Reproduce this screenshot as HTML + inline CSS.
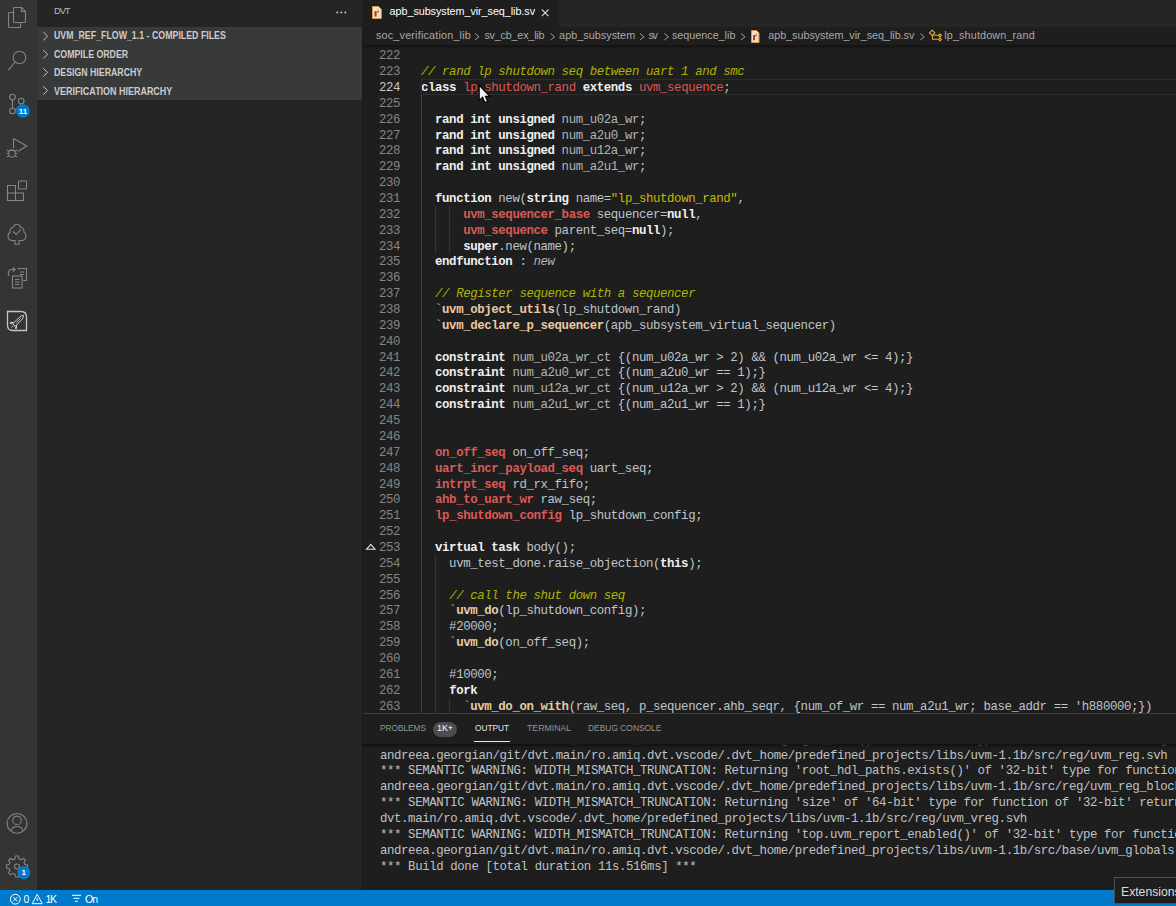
<!DOCTYPE html>
<html><head><meta charset="utf-8">
<style>
*{margin:0;padding:0;box-sizing:border-box}
html,body{width:1176px;height:906px;overflow:hidden;background:#1e1e1e}
body{position:relative;font-family:"Liberation Sans",sans-serif}
.abs{position:absolute}
svg{position:absolute;overflow:visible}
#act{left:0;top:0;width:37px;height:890px;background:#323534}
#side{left:37px;top:0;width:325px;height:890px;background:#252526}
#sechdr{left:37px;top:27px;width:325px;height:72.5px;background:#383a39}
.sh{position:absolute;left:17px;height:18px;font-size:10px;font-weight:bold;color:#cccccc;line-height:18px;white-space:nowrap}
#tabs{left:362px;top:0;width:814px;height:27px;background:#252526}
#tab{left:362px;top:0;width:197px;height:27px;background:#1e1e1e}
#bc{left:362px;top:27px;width:814px;height:18px;background:#1e1e1e}
.bt{position:absolute;top:-0.8px;font-size:10.8px;color:#a9a9a9;line-height:18px;white-space:nowrap}
#editor{left:362px;top:45px;width:814px;height:668px;background:#1e1e1e;overflow:hidden}
#shadow{left:362px;top:45px;width:814px;height:5px;background:linear-gradient(#121212,rgba(30,30,30,0))}
#code{position:absolute;left:59px;top:4.3px;font-family:"Liberation Mono",monospace;font-size:12.4px;letter-spacing:-0.406px;line-height:15.866px;white-space:pre;color:#c8c8c8}
#nums{position:absolute;left:0;top:4.3px;width:38px;text-align:right;font-family:"Liberation Mono",monospace;font-size:12.4px;letter-spacing:-0.406px;line-height:15.866px;color:#858585}
#nums .act{color:#c6c6c6}
.l{height:15.866px}
.k{color:#f0f0f0;font-weight:bold}
.t{color:#d95a55}
.tb{color:#d95a55;font-weight:bold}
.c{color:#adb400;font-style:italic}
.s{color:#c9b800}
.m{color:#e9c9a0;font-weight:bold}
.n{color:#bec5cb}
.d{color:#b4b4b4}
.i{color:#b4b4b4;font-style:italic}
#panel{left:362px;top:713px;width:814px;height:177px;background:#1e1e1e;border-top:1px solid #3e3e3e}
.pt{position:absolute;top:0;font-size:8.9px;color:#969696;white-space:nowrap;line-height:28px}
#outtext{position:absolute;left:18px;top:-10.866px;font-family:"Liberation Mono",monospace;font-size:12.4px;letter-spacing:-0.406px;line-height:15.866px;white-space:pre;color:#bec2c6}
#status{left:0;top:890px;width:1176px;height:16px;background:#007acc}
.st{position:absolute;top:0.5px;font-size:10.5px;color:#ffffff;line-height:16px;white-space:nowrap}
.ai{stroke:#858585;fill:none;stroke-width:1.1}
</style></head><body>
<div class="abs" id="act">
  <!-- explorer -->
  <svg width="37" height="40" style="left:0;top:0">
    <path class="ai" d="M13.5 8.5 Q13.5 7.5 14.5 7.5 H21.5 L25.5 11.5 V21.5 Q25.5 22.5 24.5 22.5 H14.5 Q13.5 22.5 13.5 21.5 Z" />
    <path class="ai" d="M21.5 7.5 V11.5 H25.5" />
    <path class="ai" d="M13.5 12.5 H9.5 Q8.5 12.5 8.5 13.5 V26.5 Q8.5 27.5 9.5 27.5 H19.5 Q20.5 27.5 20.5 26.5 V22.5" />
  </svg>
  <!-- search -->
  <svg width="37" height="40" style="left:0;top:40px">
    <circle class="ai" cx="19.5" cy="17.5" r="6.3" />
    <path class="ai" d="M15 22 L8.3 30.3" />
  </svg>
  <!-- scm -->
  <svg width="37" height="40" style="left:0;top:80px">
    <circle class="ai" cx="12.5" cy="17" r="2.8" />
    <circle class="ai" cx="21.2" cy="21" r="2.8" />
    <circle class="ai" cx="12.5" cy="31" r="2.8" />
    <path class="ai" d="M12.5 19.8 V28.2 M21.2 23.8 Q21 27 15.2 29.5" />
    <circle cx="23" cy="31" r="6.8" fill="#007acc" />
    <text x="23" y="34" font-size="8" font-weight="bold" fill="#fff" text-anchor="middle" font-family="Liberation Sans">11</text>
  </svg>
  <!-- debug -->
  <svg width="37" height="40" style="left:0;top:125px">
    <path class="ai" d="M13.5 13.5 V23 M13.5 13.5 L26.8 21 L18 26.3" />
    <ellipse class="ai" cx="12" cy="28.5" rx="3.3" ry="3.8" />
    <path class="ai" d="M7 25 L9 26.5 M17 25 L15 26.5 M6.5 28.5 H8.7 M17.5 28.5 H15.3 M7 32 L9 30.8 M17 32 L15 30.8 M9 25.5 H15" />
  </svg>
  <!-- extensions -->
  <svg width="37" height="40" style="left:0;top:170px">
    <path class="ai" d="M7.5 15.5 H15.5 V30.5 H7.5 Z M7.5 23 H23.5 V30.5 H15.5" />
    <rect class="ai" x="18.5" y="11" width="8" height="8" rx="0.5" />
  </svg>
  <!-- testing -->
  <svg width="37" height="40" style="left:0;top:215px">
    <path class="ai" d="M15 25.5 H12.5 Q8 25.5 8 21 Q8 18.5 10 17.2 Q9.8 12.8 13.5 12 Q14.5 9.3 17 9.3 Q19.5 9.3 20.5 12 Q24.2 12.8 24 17.2 Q26 18.5 26 21 Q26 25.5 21.5 25.5 H19 V29.2 H15 Z" />
    <path class="ai" d="M13.2 16.5 L16.2 19.5 L21 14.3" />
  </svg>
  <!-- transfer -->
  <svg width="37" height="40" style="left:0;top:255px">
    <path class="ai" d="M9 21 Q7 17 10.5 14.5 H15 M13 12.5 L15.2 14.5 L13 16.5" />
    <path class="ai" d="M18.5 14.5 V13.5 H26.5 V25.5 H23" />
    <rect class="ai" x="12.5" y="21" width="9.5" height="12" />
    <path class="ai" d="M15 24.5 H19.5 M15 27 H19.5 M15 29.5 H19.5 M20 17 H24 M20 19.5 H24" />
  </svg>
  <!-- dvt -->
  <svg width="37" height="40" style="left:0;top:300px">
    <path d="M7.5 11.5 H21 Q26.5 11.5 26.5 17 V30.5 H13 Q7.5 30.5 7.5 25 Z" stroke="#c5c5c5" stroke-width="1.3" fill="none" />
    <g transform="rotate(-45 17.5 21.5)"><path d="M12.5 19.8 H22.5 Q25.5 20.5 26 21.5 Q25.5 22.5 22.5 23.2 H12.5 Z M14.5 19.8 L12 17.3 H11 L12.3 19.8 M14.5 23.2 L12 25.7 H11 L12.3 23.2 M9 21.5 H11.5" stroke="#d5d5d5" stroke-width="0.9" fill="none"/><path d="M16 21.5 H22" stroke="#d5d5d5" stroke-width="0.8"/></g>
  </svg>
  <!-- account -->
  <svg width="37" height="40" style="left:0;top:803px">
    <circle class="ai" cx="17" cy="20.4" r="9.9" />
    <circle class="ai" cx="17" cy="17.4" r="4.3" />
    <path class="ai" d="M11 28 Q12 23.5 17 23.5 Q22 23.5 23 28" />
  </svg>
  <!-- gear -->
  <svg width="37" height="40" style="left:0;top:845.3px">
    <path class="ai" d="M15.5 11 H18.5 L19 13.8 L21.2 14.8 L23.5 13.2 L25.5 15.3 L24 17.5 L24.9 19.6 L27.5 20 V23 L24.9 23.5 L24 25.6 L25.5 27.8 L23.5 29.8 L21.2 28.3 L19 29.2 L18.5 32 H15.5 L15 29.2 L12.8 28.3 L10.5 29.8 L8.5 27.8 L10 25.6 L9.1 23.5 L6.5 23 V20 L9.1 19.6 L10 17.5 L8.5 15.3 L10.5 13.2 L12.8 14.8 L15 13.8 Z" />
    <circle class="ai" cx="17" cy="21.5" r="2.5" />
    <circle cx="23.8" cy="27.5" r="6.6" fill="#007acc" />
    <text x="23.8" y="30.4" font-size="8" font-weight="bold" fill="#fff" text-anchor="middle" font-family="Liberation Sans">1</text>
  </svg>
</div>
<div class="abs" id="side">
  <div class="abs" id="dvt" style="left:17.00px;top:5px;font-size:9.4px;color:#bbbbbb;line-height:12px;letter-spacing:-1.080px">DVT</div>
  <svg width="14" height="4" style="left:299px;top:10.5px"><circle cx="1.3" cy="1.5" r="1" fill="#c5c5c5"/><circle cx="5.3" cy="1.5" r="1" fill="#c5c5c5"/><circle cx="9.3" cy="1.5" r="1" fill="#c5c5c5"/></svg>
</div>
<div class="abs" id="sechdr">
  <svg width="10" height="72" style="left:0;top:0">
    <path d="M6.3 5 L10.5 9.2 L6.3 13.4 M6.3 23.1 L10.5 27.3 L6.3 31.5 M6.3 41.2 L10.5 45.4 L6.3 49.6 M6.3 59.3 L10.5 63.5 L6.3 67.7" stroke="#c5c5c5" stroke-width="1" fill="none"/>
  </svg>
  <div class="sh" id="sh1" style="left:17.00px;top:0.2px;transform:scaleX(0.8813);transform-origin:0 0">UVM_REF_FLOW_1.1 - COMPILED FILES</div>
  <div class="sh" id="sh2" style="left:17.00px;top:18.6px;transform:scaleX(0.8777);transform-origin:0 0">COMPILE ORDER</div>
  <div class="sh" id="sh3" style="left:17.00px;top:37px;transform:scaleX(0.8765);transform-origin:0 0">DESIGN HIERARCHY</div>
  <div class="sh" id="sh4" style="left:17.00px;top:55.9px;transform:scaleX(0.8956);transform-origin:0 0">VERIFICATION HIERARCHY</div>
</div>
<div class="abs" id="tabs"></div>
<div class="abs" id="tab">
  <svg width="12" height="14" style="left:9.5px;top:5.5px">
    <path d="M0.5 0.5 H6.5 L9.3 3.3 V12.5 H0.5 Z" fill="#f2e2c4" stroke="#d39a4a" stroke-width="1"/>
    <rect x="2.6" y="5.2" width="2" height="5.4" fill="#b0282c"/>
    <circle cx="6" cy="5.8" r="1" fill="#c8404a"/>
    <circle cx="6" cy="3.6" r="0.7" fill="#b8b020"/>
  </svg>
  <div class="abs" id="tabtxt" style="left:27.60px;top:0;font-size:10.8px;color:#ffffff;line-height:23px;white-space:nowrap;letter-spacing:-0.059px">apb_subsystem_vir_seq_lib.sv</div>
  <svg width="10" height="10" style="left:179.3px;top:8.8px"><path d="M0.8 0.5 L7.5 7.2 M7.5 0.5 L0.8 7.2" stroke="#d0d0d0" stroke-width="1.1"/></svg>
</div>
<div class="abs" id="bc">
  <div class="bt" id="b1" style="left:14.00px;letter-spacing:0.188px">soc_verification_lib</div>
  <div class="bt" id="b2" style="left:122.40px;letter-spacing:-0.209px">sv_cb_ex_lib</div>
  <div class="bt" id="b3" style="left:197.10px;letter-spacing:0.035px">apb_subsystem</div>
  <div class="bt" id="b4" style="left:286.50px;letter-spacing:-1.350px">sv</div>
  <div class="bt" id="b5" style="left:309.90px;letter-spacing:-0.012px">sequence_lib</div>
  <div class="bt" id="b6" style="left:406.20px;letter-spacing:-0.032px">apb_subsystem_vir_seq_lib.sv</div>
  <div class="bt" id="b7" style="left:582.20px;letter-spacing:0.150px">lp_shutdown_rand</div>
  <svg width="814" height="18" style="left:0;top:0">
    <path d="M113 6.5 L117 9.8 L113 13 M188.6 6.5 L192.6 9.8 L188.6 13 M278 6.5 L282 9.8 L278 13 M302.4 6.5 L306.4 9.8 L302.4 13 M379 6.5 L383 9.8 L379 13 M558.2 6.5 L562.2 9.8 L558.2 13" stroke="#a0a0a0" stroke-width="1" fill="none"/>
  </svg>
  <svg width="12" height="14" style="left:388.5px;top:2.5px">
    <path d="M0.5 0.5 H5.5 L8 3 V12.5 H0.5 Z" fill="#f2e2c4" stroke="#d39a4a" stroke-width="1"/>
    <rect x="2.2" y="5" width="1.8" height="5.2" fill="#b0282c"/>
    <circle cx="5.2" cy="5.5" r="0.9" fill="#c8404a"/>
    <circle cx="5.2" cy="3.5" r="0.6" fill="#b8b020"/>
  </svg>
  <svg width="16" height="16" style="left:566px;top:0">
    <path d="M1.5 5.8 L4.2 3.1 L6.9 5.8 L4.2 8.5 Z M4.5 8.3 V12.3 H11.5 M5.6 8.3 H11.5 M10.5 8.3 L12 6.8 L13.5 8.3 L12 9.8 Z M10.5 12.3 L12 10.8 L13.5 12.3 L12 13.8 Z" stroke="#e8a830" stroke-width="1.1" fill="none" stroke-linejoin="round"/>
  </svg>
</div>
<div class="abs" id="editor">
  <div id="nums"><div class="ln">222</div><div class="ln">223</div><div class="ln act">224</div><div class="ln">225</div><div class="ln">226</div><div class="ln">227</div><div class="ln">228</div><div class="ln">229</div><div class="ln">230</div><div class="ln">231</div><div class="ln">232</div><div class="ln">233</div><div class="ln">234</div><div class="ln">235</div><div class="ln">236</div><div class="ln">237</div><div class="ln">238</div><div class="ln">239</div><div class="ln">240</div><div class="ln">241</div><div class="ln">242</div><div class="ln">243</div><div class="ln">244</div><div class="ln">245</div><div class="ln">246</div><div class="ln">247</div><div class="ln">248</div><div class="ln">249</div><div class="ln">250</div><div class="ln">251</div><div class="ln">252</div><div class="ln">253</div><div class="ln">254</div><div class="ln">255</div><div class="ln">256</div><div class="ln">257</div><div class="ln">258</div><div class="ln">259</div><div class="ln">260</div><div class="ln">261</div><div class="ln">262</div><div class="ln">263</div></div>
  <div id="code"><div class="l">&nbsp;</div><div class="l"><span class="c">// rand lp shutdown seq between uart 1 and smc</span></div><div class="l"><span class="k">class</span><span class="n"> </span><span class="t">lp_shutdown_rand</span><span class="n"> </span><span class="k">extends</span><span class="n"> </span><span class="t">uvm_sequence</span><span class="n">;</span></div><div class="l">&nbsp;</div><div class="l"><span class="n">  </span><span class="k">rand int unsigned</span><span class="n"> </span><span class="d">num_u02a_wr</span><span class="n">;</span></div><div class="l"><span class="n">  </span><span class="k">rand int unsigned</span><span class="n"> </span><span class="d">num_a2u0_wr</span><span class="n">;</span></div><div class="l"><span class="n">  </span><span class="k">rand int unsigned</span><span class="n"> </span><span class="d">num_u12a_wr</span><span class="n">;</span></div><div class="l"><span class="n">  </span><span class="k">rand int unsigned</span><span class="n"> </span><span class="d">num_a2u1_wr</span><span class="n">;</span></div><div class="l">&nbsp;</div><div class="l"><span class="n">  </span><span class="k">function</span><span class="n"> new(</span><span class="k">string</span><span class="n"> name=</span><span class="s">"lp_shutdown_rand"</span><span class="n">,</span></div><div class="l"><span class="n">      </span><span class="tb">uvm_sequencer_base</span><span class="n"> sequencer=</span><span class="k">null</span><span class="n">,</span></div><div class="l"><span class="n">      </span><span class="tb">uvm_sequence</span><span class="n"> parent_seq=</span><span class="k">null</span><span class="n">);</span></div><div class="l"><span class="n">      </span><span class="k">super</span><span class="n">.new(name);</span></div><div class="l"><span class="n">  </span><span class="k">endfunction</span><span class="n"> : </span><span class="i">new</span></div><div class="l">&nbsp;</div><div class="l"><span class="n">  </span><span class="c">// Register sequence with a sequencer</span></div><div class="l"><span class="n">  `</span><span class="m">uvm_object_utils</span><span class="n">(lp_shutdown_rand)</span></div><div class="l"><span class="n">  `</span><span class="m">uvm_declare_p_sequencer</span><span class="n">(apb_subsystem_virtual_sequencer)</span></div><div class="l">&nbsp;</div><div class="l"><span class="n">  </span><span class="k">constraint</span><span class="n"> </span><span class="d">num_u02a_wr_ct</span><span class="n"> {(num_u02a_wr &gt; 2) &amp;&amp; (num_u02a_wr &lt;= 4);}</span></div><div class="l"><span class="n">  </span><span class="k">constraint</span><span class="n"> </span><span class="d">num_a2u0_wr_ct</span><span class="n"> {(num_a2u0_wr == 1);}</span></div><div class="l"><span class="n">  </span><span class="k">constraint</span><span class="n"> </span><span class="d">num_u12a_wr_ct</span><span class="n"> {(num_u12a_wr &gt; 2) &amp;&amp; (num_u12a_wr &lt;= 4);}</span></div><div class="l"><span class="n">  </span><span class="k">constraint</span><span class="n"> </span><span class="d">num_a2u1_wr_ct</span><span class="n"> {(num_a2u1_wr == 1);}</span></div><div class="l">&nbsp;</div><div class="l">&nbsp;</div><div class="l"><span class="n">  </span><span class="tb">on_off_seq</span><span class="n"> on_off_seq;</span></div><div class="l"><span class="n">  </span><span class="tb">uart_incr_payload_seq</span><span class="n"> uart_seq;</span></div><div class="l"><span class="n">  </span><span class="tb">intrpt_seq</span><span class="n"> rd_rx_fifo;</span></div><div class="l"><span class="n">  </span><span class="tb">ahb_to_uart_wr</span><span class="n"> raw_seq;</span></div><div class="l"><span class="n">  </span><span class="tb">lp_shutdown_config</span><span class="n"> lp_shutdown_config;</span></div><div class="l">&nbsp;</div><div class="l"><span class="n">  </span><span class="k">virtual task</span><span class="n"> body();</span></div><div class="l"><span class="n">    uvm_test_done.raise_objection(</span><span class="k">this</span><span class="n">);</span></div><div class="l">&nbsp;</div><div class="l"><span class="n">    </span><span class="c">// call the shut down seq</span></div><div class="l"><span class="n">    `</span><span class="m">uvm_do</span><span class="n">(lp_shutdown_config);</span></div><div class="l"><span class="n">    #20000;</span></div><div class="l"><span class="n">    `</span><span class="m">uvm_do</span><span class="n">(on_off_seq);</span></div><div class="l">&nbsp;</div><div class="l"><span class="n">    #10000;</span></div><div class="l"><span class="n">    </span><span class="k">fork</span></div><div class="l"><span class="n">      `</span><span class="m">uvm_do_on_with</span><span class="n">(raw_seq, p_sequencer.ahb_seqr, {num_of_wr == num_a2u1_wr; base_addr == 'h880000;})</span></div></div>
</div>
<div class="abs" id="shadow"></div>
<div class="abs" id="panel">
  <div class="pt" id="p1" style="left:17.70px;transform:scaleX(0.9332);transform-origin:0 0">PROBLEMS</div>
  <div class="abs" style="left:71px;top:8px;width:24px;height:15px;border-radius:7.5px;background:#4d4d4d"></div>
  <div class="pt" id="p2" style="left:75px;color:#ffffff">1K+</div>
  <div class="pt" id="p3" style="left:113.00px;color:#e7e7e7;transform:scaleX(0.9303);transform-origin:0 0">OUTPUT</div>
  <div class="abs" style="left:112px;top:26.5px;width:36px;height:1px;background:#e7e7e7"></div>
  <div class="pt" id="p4" style="left:165.00px;transform:scaleX(0.9826);transform-origin:0 0">TERMINAL</div>
  <div class="pt" id="p5" style="left:225.80px;transform:scaleX(0.9481);transform-origin:0 0">DEBUG CONSOLE</div>
  <div class="abs" style="left:0;top:29.5px;width:814px;height:147px;overflow:hidden"><div id="outtext"><div class="ol">*** SEMANTIC WARNING: WIDTH_MISMATCH_TRUNCATION: Returning 'get_name()' of '32-bit' type for function of 'string' return</div><div class="ol">andreea.georgian/git/dvt.main/ro.amiq.dvt.vscode/.dvt_home/predefined_projects/libs/uvm-1.1b/src/reg/uvm_reg.svh</div><div class="ol">*** SEMANTIC WARNING: WIDTH_MISMATCH_TRUNCATION: Returning 'root_hdl_paths.exists()' of '32-bit' type for function</div><div class="ol">andreea.georgian/git/dvt.main/ro.amiq.dvt.vscode/.dvt_home/predefined_projects/libs/uvm-1.1b/src/reg/uvm_reg_block.svh</div><div class="ol">*** SEMANTIC WARNING: WIDTH_MISMATCH_TRUNCATION: Returning 'size' of '64-bit' type for function of '32-bit' return</div><div class="ol">dvt.main/ro.amiq.dvt.vscode/.dvt_home/predefined_projects/libs/uvm-1.1b/src/reg/uvm_vreg.svh</div><div class="ol">*** SEMANTIC WARNING: WIDTH_MISMATCH_TRUNCATION: Returning 'top.uvm_report_enabled()' of '32-bit' type for function</div><div class="ol">andreea.georgian/git/dvt.main/ro.amiq.dvt.vscode/.dvt_home/predefined_projects/libs/uvm-1.1b/src/base/uvm_globals.svh</div><div class="ol">*** Build done [total duration 11s.516ms] ***</div></div><div class="abs" style="left:0;top:0;width:814px;height:4px;background:linear-gradient(#101010,rgba(30,30,30,0))"></div></div>
</div>
<div class="abs" id="status">
  <svg width="120" height="16" style="left:0;top:0">
    <circle cx="15.3" cy="9.2" r="4.9" stroke="#fff" stroke-width="1" fill="none"/>
    <path d="M13.3 7.2 L17.3 11.2 M17.3 7.2 L13.3 11.2" stroke="#fff" stroke-width="1"/>
    <path d="M37.2 4.3 L42.2 13.7 H32.2 Z M37.2 8 V11" stroke="#fff" stroke-width="1" fill="none"/>
    <path d="M72 5.3 H81 M73.5 8.3 H79.5 M75 11.3 H78" stroke="#fff" stroke-width="1"/>
  </svg>
  <div class="st" id="s1" style="left:23.50px;letter-spacing:0.000px">0</div>
  <div class="st" id="s2" style="left:45.50px;letter-spacing:-1.350px">1K</div>
  <div class="st" id="s3" style="left:85.00px;letter-spacing:-0.900px">On</div>
</div>
<!-- tooltip -->
<div class="abs" style="left:1114px;top:877px;width:70px;height:26.5px;background:#1e1e1e;border:1px solid #505050"></div>
<div class="abs" style="left:1121px;top:877px;font-size:12.2px;color:#dddddd;line-height:30px;white-space:nowrap">Extensions</div>
<!-- fold -->
<svg width="14" height="10" style="left:362px;top:540px">
  <path d="M8.8 4.3 L13 9.3 H4.5 Z" fill="#1e2030" stroke="#e0e0e0" stroke-width="1.1"/>
</svg>
<div class="abs" style="left:362px;top:27px;width:1px;height:863px;background:#1a1a1a"></div>
<!-- line highlight -->
<div class="abs" style="left:421px;top:79.4px;width:760px;height:15.2px;border:1.6px solid #2d2d2d;border-right:none"></div>
<!-- indent guides -->
<div class="abs" style="left:421px;top:94.5px;width:1px;height:619px;background:#404040"></div>
<div class="abs" style="left:435px;top:206px;width:1px;height:47.5px;background:#333333"></div>
<div class="abs" style="left:449px;top:206px;width:1px;height:47.5px;background:#333333"></div>
<div class="abs" style="left:435px;top:555px;width:1px;height:158px;background:#333333"></div>
<div class="abs" style="left:449px;top:698px;width:1px;height:15px;background:#333333"></div>
<!-- cursor -->
<svg width="16" height="24" style="left:478px;top:82px">
  <path d="M1.2 3.3 V18.4 L4.6 15.2 L7 20.6 L9.6 19.5 L7.4 14.4 H11.8 Z" fill="#eef2f4" stroke="#000000" stroke-width="1.1" stroke-linejoin="miter"/>
</svg>
</body></html>
